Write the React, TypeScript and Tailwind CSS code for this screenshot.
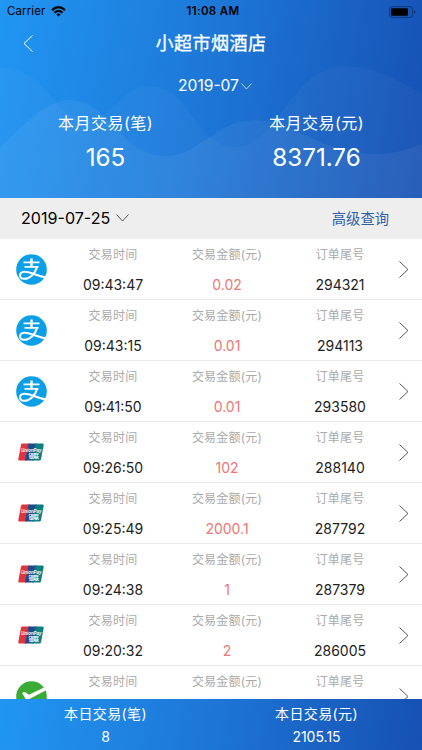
import { clsx } from 'clsx';

type Channel = 'alipay' | 'unionpay' | 'check';

interface Transaction {
  channel: Channel;
  time: string;
  amount: string;
  orderNo: string;
}

const transactions: Transaction[] = [
  { channel: 'alipay', time: '09:43:47', amount: '0.02', orderNo: '294321' },
  { channel: 'alipay', time: '09:43:15', amount: '0.01', orderNo: '294113' },
  { channel: 'alipay', time: '09:41:50', amount: '0.01', orderNo: '293580' },
  { channel: 'unionpay', time: '09:26:50', amount: '102', orderNo: '288140' },
  { channel: 'unionpay', time: '09:25:49', amount: '2000.1', orderNo: '287792' },
  { channel: 'unionpay', time: '09:24:38', amount: '1', orderNo: '287379' },
  { channel: 'unionpay', time: '09:20:32', amount: '2', orderNo: '286005' },
  { channel: 'check', time: '', amount: '', orderNo: '' }
];

const Chevron = ({ className, points, box }: { className: string; points: string; box: string }) => (
  <svg className={className} viewBox={box} fill="none" stroke="currentColor" strokeWidth="1">
    <polyline points={points} />
  </svg>
);

const ChannelIcon = ({ channel }: { channel: Channel }) => {
  if (channel === 'unionpay') {
    return (
      <svg className="h-[18px] w-[26px] overflow-visible font-['Liberation_Sans','Noto_Sans_CJK_SC',sans-serif]" viewBox="0 0 26 18">
        <path d="M4.5 .5H12L8.5 17.5H1.5Q0 17.5 .3 16L3 1.8Q3.3 .5 4.5 .5Z" fill="#e0343c" />
        <path d="M10.5 .5H19L15.5 17.5H7Z" fill="#1d4a8a" />
        <path d="M17.5 .5H24.5Q26 .5 25.7 2L23 16.2Q22.7 17.5 21.5 17.5H14Z" fill="#0c7f83" />
        <text x="3" y="9" fontSize="5.8" fontWeight="700" fontStyle="italic" fill="#fff" textLength="20.500" lengthAdjust="spacingAndGlyphs">UnionPay</text>
        <text x="10.5" y="14.8" fontSize="5.4" fontWeight="700" fill="#fff" textLength="10.5">银联</text>
      </svg>
    );
  }

  if (channel === 'check') {
    return (
      <svg className="size-[31px]" viewBox="0 0 31 31">
        <circle cx="15.5" cy="15.5" r="15.3" fill="#3bab36" />
        <path d="M6.2 12.2Q7.5 10.3 9.2 11.3L13 13.8L28.5 6.2L30 9.3L12.5 18.5Q10.5 19.3 9.5 17.7Z" fill="#fff" />
      </svg>
    );
  }

  return (
    <svg className="size-[31px]" viewBox="0 0 31 31">
      <circle cx="15.5" cy="15.5" r="15.3" fill="#0b9fe8" />
      <g fill="none" stroke="#fff">
        <path d="M7.5 8.3H23.5M8.5 12.9H22.5" strokeWidth="1.7" />
        <path d="M15.5 4.5V12.9" strokeWidth="2.4" />
        <path d="M21 13C19.5 18.5 14.5 24.8 8.2 24.8C2.5 24.5 2.8 18.3 8.2 17.7C13.5 17.3 19.5 21.5 30 23.6" strokeWidth="2.1" />
      </g>
    </svg>
  );
};

const StatusBar = () => (
  <div className="relative flex h-[22px] items-center justify-between pl-[7px] pr-[6px] pt-px text-black">
    <div className="flex items-center gap-[6px]">
      <span className="text-[11.5px] tracking-[0.1px]">Carrier</span>
      <svg className="h-[11px] w-[15px]" viewBox="0 0 15 11" fill="none" stroke="currentColor">
        <path d="M1 4.1Q7.5 -1.8 14 4.1" strokeWidth="2.1" />
        <path d="M3.4 6.7Q7.5 3.1 11.6 6.7" strokeWidth="2" />
        <path d="M7.5 10.5L5.3 8.3Q7.5 6.5 9.7 8.3Z" fill="currentColor" stroke="none" />
      </svg>
    </div>
    <span className="absolute inset-x-0 pl-[4px] text-center text-[11.5px] font-semibold tracking-[0.35px]">11:08 AM</span>
    <svg className="h-[12px] w-[27px]" viewBox="0 0 27 12">
      <rect x=".6" y=".6" width="22.8" height="10.8" rx="2.5" fill="none" stroke="#10387c" />
      <rect x="2" y="2.2" width="17" height="7.6" rx="1" />
      <path d="M25 4Q26.5 4.5 26.5 6Q26.5 7.5 25 8Z" fill="#10387c" />
    </svg>
  </div>
);

const MonthStat = ({ label, value }: { label: string; value: string }) => (
  <div className="flex flex-1 flex-col items-center">
    <span className="h-[24px] text-[16px] leading-[24px] tracking-[0.5px]">{label}</span>
    <span className="mt-[7px] h-[32px] text-[24.2px] leading-[32px]">{value}</span>
  </div>
);

const Field = ({ label, value, red }: { label: string; value: string; red?: boolean }) => (
  <div className="flex w-[114px] flex-col items-center">
    <span className="mt-[6px] h-[20px] text-[12px] leading-[20px] tracking-[0.2px] text-[#aaaaaa]">{label}</span>
    <span className={clsx('mt-[10px] text-[14px] leading-[20px]', red ? 'text-[#f07575]' : 'text-[#222222]')}>
      {value}
    </span>
  </div>
);

const DayStat = ({ label, value }: { label: string; value: string }) => (
  <div className="flex flex-1 flex-col items-center">
    <span className="mt-[5px] h-[20px] text-[14px] leading-[20px] tracking-[0.4px]">{label}</span>
    <span className="mt-[3px] h-[20px] text-[14px] leading-[20px]">{value}</span>
  </div>
);

export default function App() {
  return (
    <div className="flex h-[750px] w-[422px] flex-col overflow-hidden bg-white font-[Inter,'Noto_Sans_CJK_SC',sans-serif]">
      <header className="relative h-[198px] shrink-0 bg-[linear-gradient(100deg,#2196f3_0%,#1d76d6_50%,#1650b3_100%)] text-white">
        <svg className="absolute inset-0 h-[198px] w-[422px]" viewBox="0 0 422 198" fill="#fff">
          <path d="M0 68C50 68 50 119 88 119C115 119 120 86 150 86C190 86 195 147 235 147C280 147 290 66 345 66C375 66 395 80 422 93V198H0Z" fillOpacity=".03" />
          <path d="M0 147C25 125 45 100 70 100C110 100 120 156 165 156C200 156 215 120 255 120C295 120 320 154 375 154C395 154 408 149 422 144V198H0Z" fillOpacity=".055" />
        </svg>
        <div className="relative flex h-full flex-col">
          <StatusBar />
          <div className="relative flex h-[43px] items-center pl-[23px]">
            <Chevron className="h-[17px] w-[10px]" box="0 0 10 17" points="9.5,0.5 1,8.5 9.5,16.5" />
            <h1 className="absolute inset-x-0 text-center text-[18px] leading-[43px] tracking-[0.5px] [-webkit-text-stroke:0.3px_white]">小超市烟酒店</h1>
          </div>
          <div className="mt-[10px] flex h-[22px] items-center justify-center gap-[2px] pl-[8px]">
            <span className="text-[15.6px] leading-[22px]">2019-07</span>
            <Chevron className="h-[7px] w-[11px] opacity-70" box="0 0 11 7" points="0.5,0.5 5.5,6 10.5,0.5" />
          </div>
          <div className="mt-[14px] flex">
            <MonthStat label="本月交易(笔)" value="165" />
            <MonthStat label="本月交易(元)" value="8371.76" />
          </div>
        </div>
      </header>

      <div className="flex h-[41px] shrink-0 items-center justify-between bg-[#eeeeee] pl-[21px] pr-[33px]">
        <div className="flex items-center gap-[6px] text-black">
          <span className="text-[16.1px]">2019-07-25</span>
          <Chevron className="h-[8px] w-[13px] text-[#555555]" box="0 0 13 8" points="0.5,0.5 6.5,7 12.5,0.5" />
        </div>
        <span className="text-[14.3px] text-[#2f5fa8]">高级查询</span>
      </div>

      <main className="min-h-0 flex-1 overflow-hidden">
        {transactions.map((item, i) => (
          <div key={i} className="flex h-[61px] border-b border-[#ececec]">
            <div className="flex w-[56px] items-center pl-[7px]">
              <div className="flex w-[48px] justify-center">
                <ChannelIcon channel={item.channel} />
              </div>
            </div>
            <Field label="交易时间" value={item.time} />
            <Field label="交易金额(元)" value={item.amount} red />
            <div className="-ml-px">
              <Field label="订单尾号" value={item.orderNo} />
            </div>
            <div className="flex items-center pl-[2px] text-[#555555]">
              <Chevron className="h-[17px] w-[10px]" box="0 0 10 17" points="0.5,0.5 9,8.5 0.5,16.5" />
            </div>
          </div>
        ))}
      </main>

      <footer className="flex h-[51px] shrink-0 bg-[linear-gradient(100deg,#2196f3_0%,#1d76d6_50%,#1650b3_100%)] text-white">
        <DayStat label="本日交易(笔)" value="8" />
        <DayStat label="本日交易(元)" value="2105.15" />
      </footer>
    </div>
  );
}
